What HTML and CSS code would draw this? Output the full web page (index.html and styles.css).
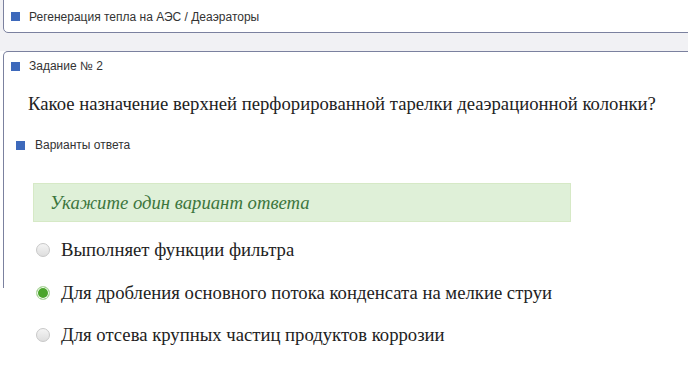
FILE: index.html
```html
<!DOCTYPE html>
<html lang="ru">
<head>
  <meta charset="UTF-8">
  <title>Задание № 2</title>
  <link rel="stylesheet" href="styles.css">
</head>
<body>
  <div class="page">
    <div class="top">
      <div class="panel crumbs">
        <span class="mark"></span>
        <span class="label">Регенерация тепла на АЭС / Деаэраторы</span>
      </div>
    </div>

    <div class="panel task">
      <div class="task-head">
        <span class="mark"></span>
        <span class="label">Задание № 2</span>
      </div>
      <div class="question">Какое назначение верхней перфорированной тарелки деаэрационной колонки?</div>
      <div class="answers-head">
        <span class="mark"></span>
        <span class="label">Варианты ответа</span>
      </div>
      <div class="hint">Укажите один вариант ответа</div>
      <ul class="options">
        <li><span class="radio"></span>Выполняет функции фильтра</li>
        <li><span class="radio checked"></span>Для дробления основного потока конденсата на мелкие струи</li>
        <li><span class="radio"></span>Для отсева крупных частиц продуктов коррозии</li>
      </ul>
    </div>
  </div>
</body>
</html>
```
FILE: styles.css
```css
body {
  margin: 0;
  overflow: hidden;
  background: #fff;
  font-family: "Liberation Sans", Arial, sans-serif;
}

.page {
  width: 700px;
  height: 384px;
}

.top {
  background: #f1f1f4;
  padding: 0 0 18px 3px;
}

.panel {
  background: #fff;
  border: 1px solid #7b819f;
  border-radius: 5px;
}

.mark {
  display: inline-block;
  width: 9px;
  height: 9px;
  background: #3d69bb;
}

.label {
  font-size: 12px;
  color: #333;
}

.crumbs {
  display: flex;
  align-items: center;
  gap: 9px;
  margin-top: -6px;
  height: 39px;
  padding: 6px 7px 0;
  box-sizing: border-box;
}

.task {
  margin-left: 3px;
  height: 236px;
  border-bottom: none;
  border-radius: 5px 5px 0 0;
}

.task-head {
  display: flex;
  align-items: center;
  gap: 9px;
  padding: 8px 7px 0;
  height: 12px;
}

.question {
  margin: 21px 0 0 24px;
  font-family: "Liberation Serif", "Times New Roman", serif;
  font-size: 18.7px;
  color: #222;
  white-space: nowrap;
}

.answers-head {
  display: flex;
  align-items: center;
  gap: 10px;
  padding: 0 12px;
  margin-top: 23px;
}

.hint {
  width: 538px;
  height: 39px;
  margin: 31px 0 0 29px;
  padding-left: 16px;
  box-sizing: border-box;
  background: #dff0d8;
  border: 1px solid #d6e9c6;
  font-family: "Liberation Serif", "Times New Roman", serif;
  font-style: italic;
  font-size: 18.7px;
  line-height: 37px;
  color: #3c763d;
}

.options {
  list-style: none;
  margin: 7px 0 0 0;
  padding: 0;
}

.options li {
  display: flex;
  align-items: center;
  gap: 11px;
  height: 42.5px;
  padding-left: 32px;
  font-family: "Liberation Serif", "Times New Roman", serif;
  font-size: 18.7px;
  color: #222;
}

.radio {
  width: 12px;
  height: 12px;
  border-radius: 50%;
  border: 1px solid #c8c8c8;
  background: linear-gradient(#f4f4f4, #dedede);
}

.radio.checked {
  border-color: #b7dca8;
  background: #4aa52a;
  box-shadow: inset 0 0 0 1px #fff;
}
```
